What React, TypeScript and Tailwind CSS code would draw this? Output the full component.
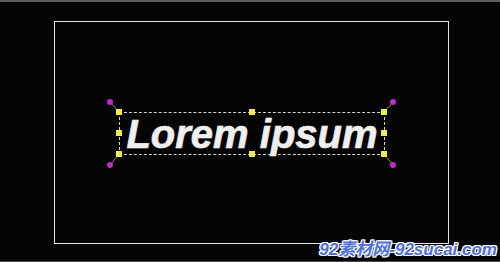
const handles = [
  [119, 112], [252, 112], [384, 112],
  [119, 133], [384, 133],
  [119, 154], [252, 154], [384, 154],
];

const pivots = [
  [110, 102, 119, 112],
  [393, 102, 384, 112],
  [110, 165, 119, 154],
  [393, 165, 384, 154],
];

export default function App() {
  return (
    <div className="relative w-[500px] h-[262px] overflow-hidden bg-[#050505] font-['Liberation_Sans',sans-serif]">
      <div className="h-[2px] bg-[#5c5c5c]" />

      {/* frame */}
      <div className="absolute left-[54px] top-[21px] w-[395px] h-[223px] border border-[#e4e4e4]" />

      {/* rotate connectors */}
      <svg className="absolute inset-0" width="500" height="262">
        {pivots.map(([x1, y1, x2, y2], i) => (
          <line key={i} x1={x1} y1={y1} x2={x2} y2={y2} stroke="#8a8a8a" strokeWidth="1" />
        ))}
      </svg>

      {/* selection box */}
      <div className="absolute left-[119px] top-[112px] w-[266px] h-[43px] border border-dashed border-[#d4d4d4] flex items-center justify-center">
        <span className="text-[40px] leading-none font-bold italic text-[#efefef] mt-[1px] [-webkit-text-stroke:0.7px_#efefef]">
          Lorem ipsum
        </span>
      </div>

      {handles.map(([x, y], i) => (
        <div
          key={i}
          className="absolute w-[6px] h-[6px] -ml-[3px] -mt-[3px] bg-[#ecec4a]"
          style={{ left: x, top: y }}
        />
      ))}

      {pivots.map(([x, y], i) => (
        <div
          key={i}
          className="absolute w-[6px] h-[6px] -ml-[3px] -mt-[3px] rounded-full bg-[#c42ac8]"
          style={{ left: x, top: y }}
        />
      ))}

      {/* watermark */}
      <div className="absolute right-[3px] bottom-[4px] text-[17px] leading-none font-bold italic text-[#4d6fe0] font-['Liberation_Sans','Noto_Sans_CJK_SC',sans-serif] [text-shadow:1px_0_#fff,-1px_0_#fff,0_1px_#fff,0_-1px_#fff,1px_1px_#fff,-1px_-1px_#fff,1px_-1px_#fff,-1px_1px_#fff]">
        92素材网-92sucai.com
      </div>

      <div className="absolute left-0 right-0 bottom-0 h-[1px] bg-[#4a4a4a]" />
    </div>
  );
}
